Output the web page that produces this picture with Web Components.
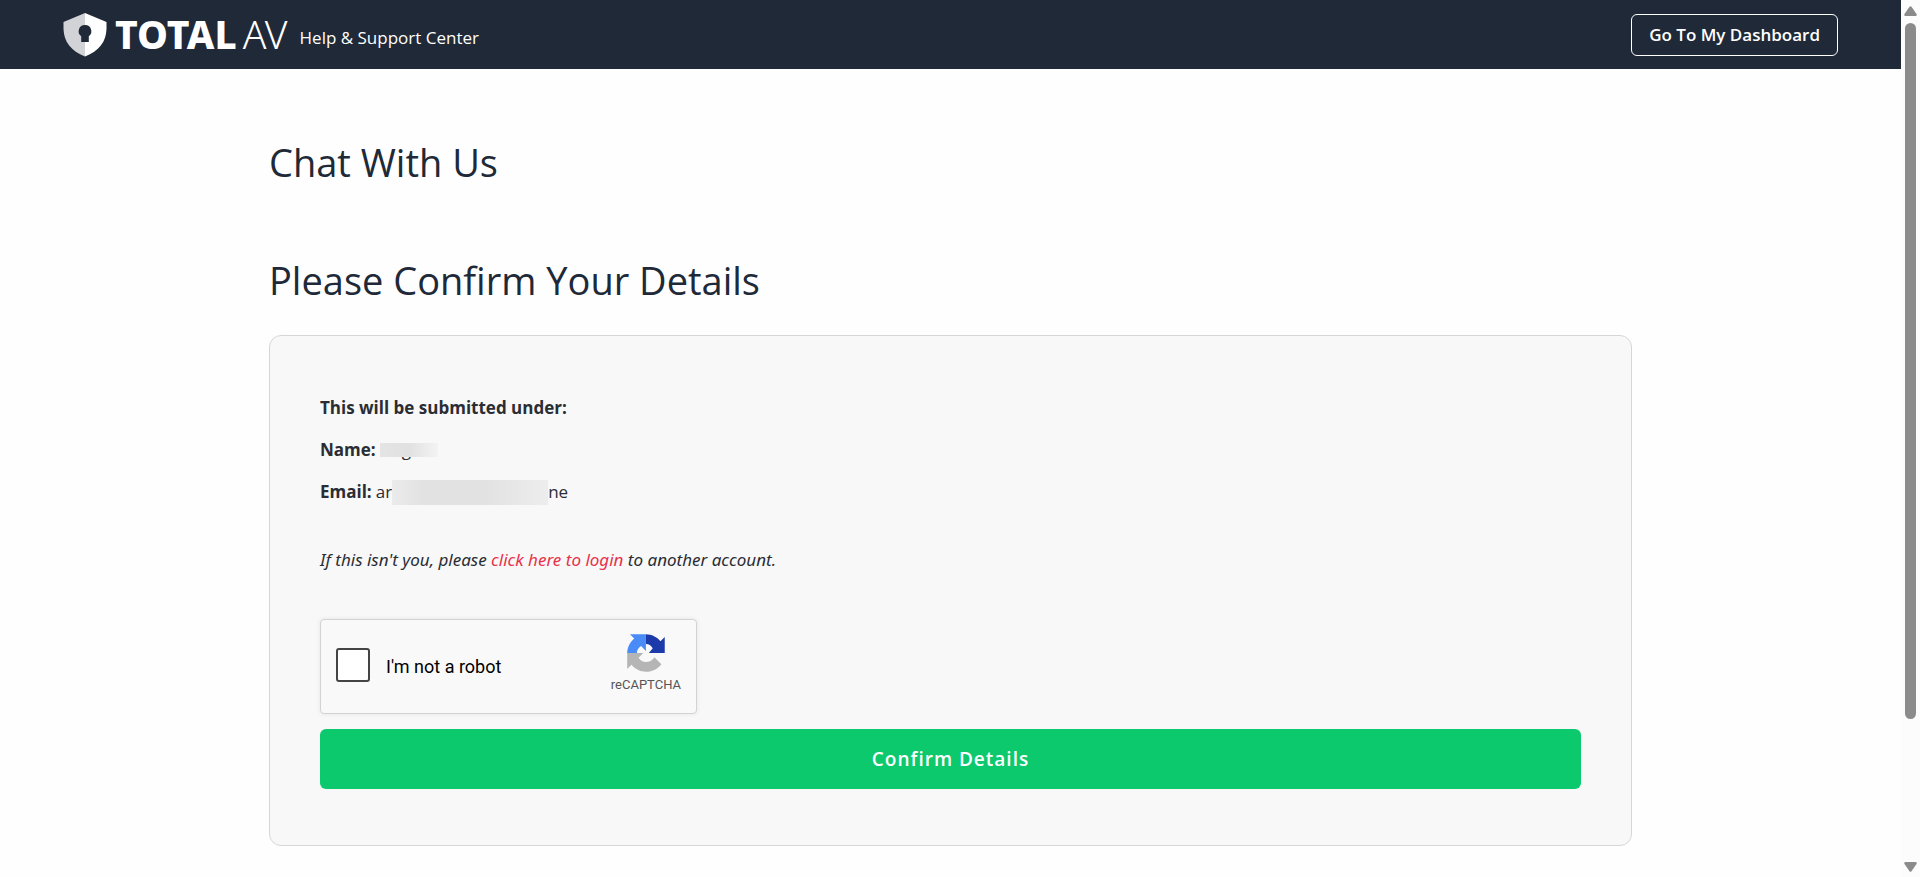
<!DOCTYPE html>
<html lang="en">
<head>
<meta charset="utf-8">
<meta name="viewport" content="width=device-width, initial-scale=1">
<title>Chat With Us</title>
<style>
html,body{margin:0;background:#fefefe}
body{font-family:"Open Sans","Noto Sans",sans-serif;font-size:17px;line-height:24px;color:#2a2d34}
</style>
</head>
<body>
<support-page></support-page>
<script>
function define(name, html) {
  const template = document.createElement('template');
  template.innerHTML = html;
  customElements.define(name, class extends HTMLElement {
    constructor() {
      super();
      this.attachShadow({ mode: 'open' }).append(template.content.cloneNode(true));
    }
  });
}

define('brand-logo', `
<style>
:host{display:block}
a{display:flex;align-items:center;color:#fff;text-decoration:none;gap:8px}
svg{display:block;width:44px;height:44px}
.word{display:flex;gap:6px;font-size:39px;line-height:42px;padding-bottom:2px;font-family:"Noto Sans","Open Sans",sans-serif}
b{font-weight:800}
.av{font-weight:300}
</style>
<a href="#" aria-label="TotalAV home">
<svg viewBox="0 0 44 44" aria-hidden="true">
<path fill="#d2d3d7" d="M22 0 .5 9v7C1 29 8 38 22 43.500z"/>
<path fill="#fff" d="M22 0l21.500 9v7C43 29 36 38 22 43.500z"/>
<path fill="#202938" d="M22 12a6.200 6.200 0 0 0-3.800 11.200V29h7.600v-5.800A6.200 6.200 0 0 0 22 12z"/>
</svg>
<span class="word"><b>TOTAL</b><span class="av">AV</span></span>
</a>`);

define('site-header', `
<style>
:host{display:block;background:#202938;color:#fff}
header{display:flex;align-items:center;justify-content:space-between;box-sizing:border-box;min-height:69px;padding:0 63px}
.brand{display:flex;align-items:center;gap:12px}
.sub{padding-top:6px;font-size:17px;line-height:24px}
button{box-sizing:border-box;height:42px;padding:0 17px;border:1px solid #fff;border-radius:6px;background:transparent;color:#fff;font:600 17px/24px "Open Sans",sans-serif;cursor:pointer}
</style>
<header><div class="brand"><brand-logo></brand-logo><span class="sub"><slot></slot></span></div>
<button type="button"><slot name="action"></slot></button></header>`);

define('page-heading', `
<style>
:host{display:block}
h1{margin:0;font-size:38px;line-height:48px;font-weight:400;color:#202938}
</style><h1><slot></slot></h1>`);

define('detail-row', `
<style>
:host{display:flex;align-items:center;gap:4px;height:24px}
b{font-weight:700}
.value{display:flex;align-items:center}
</style><b><slot name="label"></slot></b><span class="value"><slot></slot></span>`);

define('redacted-value', `
<style>
:host{display:block;position:relative;width:58px;height:24px;text-indent:22px}
.mask{position:absolute;left:0;right:0;top:5px;height:14px;background:linear-gradient(90deg,#e4e4e4,#e1e1e1 50%,#f3f3f3)}
:host([wide]){width:156px}
:host([wide]) .mask{top:0;height:25px;background:linear-gradient(90deg,#ebebeb,#e2e2e2 20%,#e2e2e2 60%,#ededed)}
</style><slot></slot><span class="mask"></span>`);

define('robot-check', `
<style>
:host{display:flex;align-items:center;box-sizing:border-box;width:377px;max-width:100%;height:95px;padding:0 15px;border:1px solid #d3d3d3;border-radius:4px;background:#f9f9f9;box-shadow:0 0 5px rgba(0,0,0,.08);font-family:Roboto,sans-serif;color:#000}
label{display:flex;align-items:center;gap:16px;flex:1;font-size:18px;line-height:24px}
input{appearance:none;box-sizing:border-box;width:34px;height:34px;margin:0 0 4px;border:2px solid #444;border-radius:3px;background:#fff}
.brand{display:flex;flex-direction:column;align-items:center;gap:3px;padding-bottom:7px;font-size:13px;line-height:18px;color:#555}
svg{display:block;width:40px;height:40px}
</style>
<label><input type="checkbox"><span>I'm not a robot</span></label>
<div class="brand">
<svg viewBox="0 0 64 64" aria-hidden="true">
<path fill="#1c3aa9" d="M62 31.953a30 30 0 0 0-.013-.858V6.420l-6.821 6.820C49.583 6.407 41.089 2.039 31.577 2.039v15.500c4.500-.3 8.500 2.200 11.200 6.700l-6.300 7.713z"/>
<path fill="#4a8cf7" d="M31.862 2.009c-.288 0-.573.006-.858.014H6.330l6.821 6.820C6.316 14.426 1.949 22.920 1.949 32.432h15.500c-.3-4.500 2.200-8.600 6.600-11.500l7.813 7.700z"/>
<path fill="#b5b5b5" d="M1.918 32.147c0 .287.006.573.014.858V57.680l6.821-6.821c5.583 6.834 14.077 11.202 23.589 11.202 9.899 0 18.693-4.730 24.257-12.055L45.418 38.708a14.800 14.800 0 0 1-4.518 5.072c-1.949 1.520-4.709 2.763-8.557 2.763-5.400 0-9.600-2.700-12.200-6.900l7.500-7.496z"/>
</svg><span>reCAPTCHA</span></div>`);

define('primary-button', `
<style>
:host{display:block}
button{display:block;width:100%;height:60px;border:0;border-radius:6px;background:#0cc96e;color:#fff;font:600 19px/24px "Open Sans",sans-serif;letter-spacing:1px;cursor:pointer}
</style><button type="submit"><slot></slot></button>`);

define('details-card', `
<style>
:host{display:block;box-sizing:border-box;padding:60px 50px 56px;border:1px solid #d6d6d6;border-radius:12px;background:#f8f8f8}
.rows{display:flex;flex-direction:column;gap:18px}
.notice{margin:44px 0 47px;font-style:italic;font-family:"Noto Sans","Open Sans",sans-serif}
a{color:#e8324a;text-decoration:none}
robot-check{margin-bottom:15px}
</style>
<form onsubmit="return false">
<div class="rows">
<detail-row><span slot="label">This will be submitted under:</span></detail-row>
<detail-row><span slot="label">Name:</span><redacted-value>g</redacted-value></detail-row>
<detail-row><span slot="label">Email:</span>ar<redacted-value wide></redacted-value>ne</detail-row>
</div>
<p class="notice">If this isn't you, please <a href="#">click here to login</a> to another account.</p>
<robot-check></robot-check>
<primary-button>Confirm Details</primary-button>
</form>`);

define('scroll-rail', `
<style>
:host{display:flex;flex-direction:column;align-items:center;box-sizing:border-box;width:19px;height:100vh;padding:6px 0 5px;background:#fcfcfc;position:sticky;top:0}
svg{display:block;width:13px;height:10px;flex:none}
.track{flex:1;width:11px;padding-top:7px;box-sizing:border-box}
.thumb{height:83%;border-radius:6px;background:#8b8b8b}
</style>
<svg viewBox="0 0 13 10" aria-hidden="true"><path fill="#8b8b8b" d="M5.500.8Q6.500-.4 7.500.8l5 7.200q.8 2-1 2h-10q-1.800 0-1-2z"/></svg>
<div class="track"><div class="thumb"></div></div>
<svg viewBox="0 0 13 10" aria-hidden="true"><path fill="#8b8b8b" d="M5.500 9.200q1 1.200 2 0l5-7.200q.8-2-1-2h-10q-1.800 0-1 2z"/></svg>`);

define('support-page', `
<style>
:host{display:grid;grid-template-columns:minmax(0,1fr) auto;min-height:100vh}
main{max-width:1363px;margin:0 auto;padding:69px 24px 31px}
.second{margin-top:70px;margin-bottom:31px}
scroll-rail{align-self:start}
</style>
<div>
<site-header>Help &amp; Support Center<span slot="action">Go To My Dashboard</span></site-header>
<main>
<page-heading>Chat With Us</page-heading>
<page-heading class="second">Please Confirm Your Details</page-heading>
<details-card></details-card>
</main>
</div>
<scroll-rail></scroll-rail>`);
</script>
</body>
</html>
